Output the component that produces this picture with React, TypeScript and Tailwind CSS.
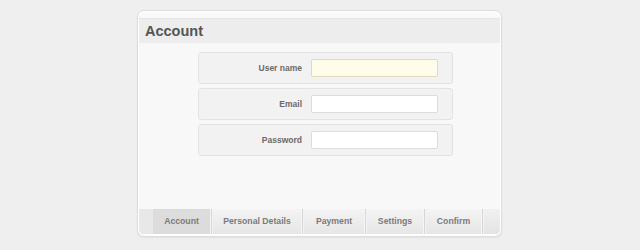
const fields = [
  { label: "User name", active: true },
  { label: "Email", active: false },
  { label: "Password", active: false },
];

const tabs = [
  { name: "Account", w: "w-[57px]" },
  { name: "Personal Details", w: "w-[88px]" },
  { name: "Payment", w: "w-[60px]" },
  { name: "Settings", w: "w-[56px]" },
  { name: "Confirm", w: "w-[55px]" },
];

function Sep() {
  return (
    <div className="flex w-[3px]">
      <div className="w-px bg-[#f6f6f6]" />
      <div className="w-px bg-[#d6d6d6]" />
      <div className="w-px bg-[#f3f3f3]" />
    </div>
  );
}

export default function App() {
  return (
    <div
      className="w-[640px] h-[250px] bg-[#efefef] pt-[10px]"
      style={{ fontFamily: '"Liberation Sans", Arial, sans-serif' }}
    >
      <div className="ml-[137px] w-[365px] h-[227px] rounded-[7px] border border-[#dcdcdc] bg-white p-[1px] shadow-[0_1px_2px_rgba(0,0,0,0.06)]">
        <div className="flex h-full flex-col overflow-hidden rounded-[6px] bg-[#f8f8f8]">
          {/* header */}
          <div className="h-[6px] bg-[#f9f9f9]" />
          <div className="flex h-[25px] items-center border-t border-[#e4e4e4] bg-[#ededed] pl-[6px] pt-px">
            <h1 className="text-[14.5px] font-bold text-[#555]">Account</h1>
          </div>

          {/* form */}
          <div className="flex flex-1 flex-col gap-[4px] pl-[59px] pt-[9px]">
            {fields.map((f) => (
              <div
                key={f.label}
                className="flex h-[32px] w-[255px] items-center rounded-[3px] border border-[#e3e3e3] bg-[#f2f2f2]"
              >
                <span className="w-[103px] text-right text-[8.5px] font-bold text-[#6a6a6a]">
                  {f.label}
                </span>
                <div
                  className={`ml-[9px] h-[18px] w-[127px] rounded-[2px] border ${
                    f.active
                      ? "border-[#dedbbf] bg-[#fffde9]"
                      : "border-[#dcdcdc] bg-white"
                  }`}
                />
              </div>
            ))}
          </div>

          {/* tabs */}
          <div className="flex h-[26px] border-b border-white bg-[#e8e8e8] pl-[14px]">
            {tabs.map((t, i) => (
              <div key={t.name} className="flex">
                <div
                  className={`flex ${t.w} items-center justify-center text-[8.7px] font-bold text-[#7a7a7a] ${
                    i === 0
                      ? "bg-[#dcdcdc]"
                      : "bg-gradient-to-b from-[#f4f4f4] to-[#e6e6e6]"
                  }`}
                >
                  {t.name}
                </div>
                <Sep />
              </div>
            ))}
            <div className="flex-1 bg-gradient-to-b from-[#f0f0f0] to-[#e4e4e4]" />
          </div>
        </div>
      </div>
    </div>
  );
}
